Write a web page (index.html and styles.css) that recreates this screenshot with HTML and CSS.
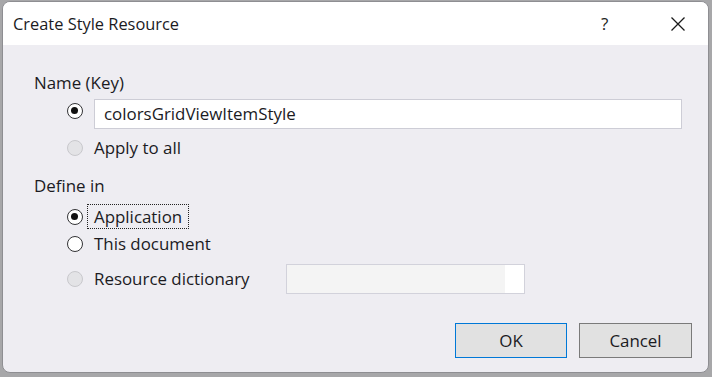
FILE: index.html
```html
<!DOCTYPE html>
<html>
<head>
<meta charset="utf-8">
<link rel="stylesheet" href="styles.css">
</head>
<body>
<div class="window">
  <div class="titlebar">
    <span class="title">Create Style Resource</span>
    <span class="help">?</span>
    <span class="close">
      <svg width="16" height="16" viewBox="0 0 16 16"><path d="M1.5 1.5 L14.5 14.5 M14.5 1.5 L1.5 14.5" stroke="#1a1a1a" stroke-width="1.3" fill="none"/></svg>
    </span>
  </div>
  <div class="content">
    <div class="group-label name-label">Name (Key)</div>
    <div class="row row-key">
      <span class="radio checked"></span>
      <div class="textbox">colorsGridViewItemStyle</div>
    </div>
    <div class="row row-apply">
      <span class="radio disabled"></span>
      <span class="opt">Apply to all</span>
    </div>
    <div class="group-label define-label">Define in</div>
    <div class="row row-app">
      <span class="radio checked"></span>
      <span class="opt focus">Application</span>
    </div>
    <div class="row row-doc">
      <span class="radio"></span>
      <span class="opt">This document</span>
    </div>
    <div class="row row-dict">
      <span class="radio disabled"></span>
      <span class="opt opt-dict">Resource dictionary</span>
      <div class="combo"><span class="combo-field"></span><span class="combo-end"></span></div>
    </div>
    <div class="buttons">
      <div class="btn btn-default">OK</div>
      <div class="btn">Cancel</div>
    </div>
  </div>
</div>
</body>
</html>
```
FILE: styles.css
```css
html, body {
  margin: 0;
  padding: 0;
}
body {
  width: 712px;
  height: 377px;
  background: #a7a7a9;
  font-family: "Open Sans", "Noto Sans", sans-serif;
  color: #1b1b1f;
  overflow: hidden;
}
.window {
  margin: 1px 3px 2px 2px;
  height: 372px;
  border: 1px solid #8e8e92;
  border-radius: 8px;
  background: #eeedf2;
  overflow: hidden;
  display: flex;
  flex-direction: column;
  box-sizing: border-box;
}
.titlebar {
  height: 43px;
  flex: none;
  background: #ffffff;
  display: flex;
  align-items: center;
  padding-left: 10px;
  font-size: 16.4px;
}
.title {
  flex: 1;
}
.help {
  width: 18px;
  font-size: 17px;
  color: #222;
  margin-right: 51px;
}
.close {
  display: flex;
  margin-right: 22px;
}
.content {
  flex: 1;
  display: flex;
  flex-direction: column;
  padding-left: 31px;
  padding-right: 16px;
  font-size: 16.9px;
}
.group-label {
  height: 22px;
  line-height: 22px;
}
.name-label { margin-top: 27px; }
.define-label { margin-top: 16px; }
.row {
  display: flex;
  align-items: center;
  padding-left: 33px;
}
.radio {
  width: 16px;
  height: 16px;
  box-sizing: border-box;
  border: 1.5px solid #333336;
  border-radius: 50%;
  background: #ffffff;
  flex: none;
  position: relative;
}
.radio.checked::after {
  content: "";
  position: absolute;
  left: 3px;
  top: 3px;
  width: 7px;
  height: 7px;
  border-radius: 50%;
  background: #111;
}
.radio.disabled {
  border-color: #c8c8cc;
  background: #e3e3e6;
}
.opt {
  margin-left: 4px;
  padding: 0 6px;
  border: 1px dotted transparent;
  line-height: 22px;
}
.opt.focus {
  border-color: #222;
}
.opt-dict {
  width: 185px;
}
.row-key {
  height: 30px;
  margin-top: 5px;
  align-items: flex-start;
}
.row-key .radio { margin-top: 4px; }
.textbox {
  margin-left: 11px;
  width: 588px;
  height: 30px;
  box-sizing: border-box;
  border: 1px solid #cdcdd6;
  background: #ffffff;
  padding-left: 9px;
  line-height: 28px;
}
.row-apply {
  height: 22px;
  margin-top: 8px;
}
.row-app {
  height: 25px;
  margin-top: 7px;
}
.row-app .opt { line-height: 23px; }
.row-doc {
  height: 22px;
  margin-top: 4px;
}
.row-dict {
  height: 30px;
  margin-top: 9px;
}
.combo {
  margin-left: 0;
  width: 239px;
  height: 30px;
  box-sizing: border-box;
  border: 1px solid #d2d2db;
  display: flex;
}
.combo-field {
  flex: 1;
  background: #f4f4f4;
}
.combo-end {
  width: 19px;
  background: #ffffff;
}
.buttons {
  display: flex;
  justify-content: flex-end;
  gap: 12px;
  margin-top: 29px;
}
.btn {
  width: 113px;
  height: 35px;
  box-sizing: border-box;
  border: 1px solid #7a7a7a;
  background: #e1e1e1;
  display: flex;
  align-items: center;
  justify-content: center;
  font-size: 16.9px;
}
.btn-default {
  width: 112px;
  border-color: #0078d7;
}
```
